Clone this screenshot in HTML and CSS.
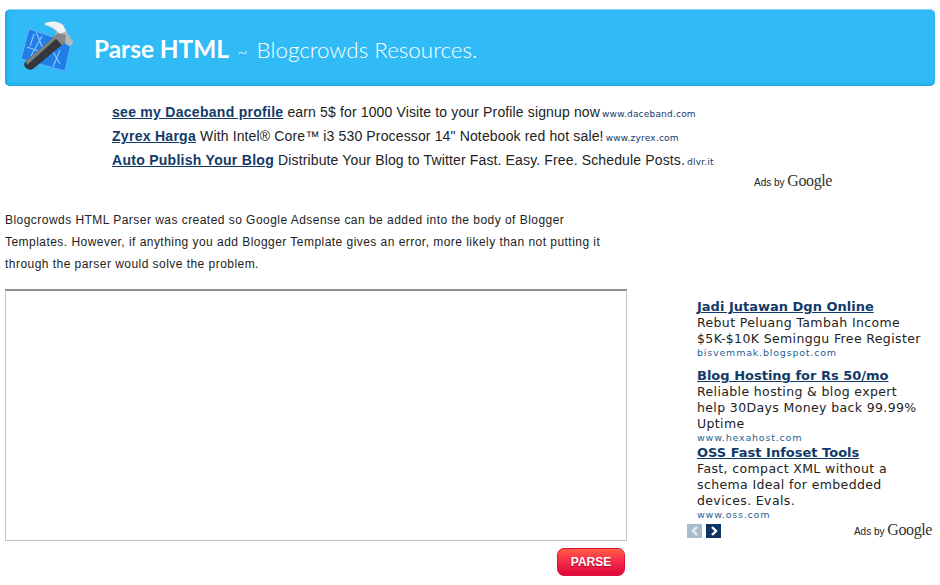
FILE: index.html
```html
<!DOCTYPE html>
<html lang="en">
<head>
    <meta charset="UTF-8">
    <title>Parse HTML ~ Blogcrowds Resources.</title>
    <link rel="stylesheet" href="styles.css">
</head>
<body>
    <div class="header">
        <svg class="logo" width="54" height="54" viewBox="20 21 54 54">
            <!-- blueprint -->
            <polygon points="29,29 71,43 65,71 21,59" fill="#1f7fe8" stroke="#62aef5" stroke-width="1"/>
            <path d="M36,32 L46,56 M42,36 L31,56 M27,47 L50,55 M52,50 L60,64 M60,50 L53,67 M34,34 L30,46" stroke="#8fc2f5" stroke-width="1.2" fill="none"/>
            <!-- handle -->
            <path d="M55,36 L63,44 L33,69 Q28,71 25,67 Q23,64 26,61 Z" fill="#34383b"/>
            <path d="M55,36 L57,38 L27,65 L26,61 Z" fill="#7d8285"/>
            <!-- head -->
            <path d="M45,23 Q56,19 63,25 L69,36 L73,41 Q73,45 70,46 Q67,46 64,42 L62,45 L54,36 L57,32 Q52,27 45,25 Z" fill="#b4b9bc"/>
            <path d="M45,23 Q56,19 63,25 L66,31 L60,34 Q53,26 45,25 Z" fill="#f1f2f3"/>
            <path d="M58,33 L66,35 L65,42 L62,45 L54,36 Z" fill="#85898c"/>
        </svg>
        <h1>Parse HTML <span class="tilde">~</span> <span class="tagline">Blogcrowds Resources.</span></h1>
    </div>

    <div class="link-ads">
        <p><a href="#">see my Daceband profile</a> earn 5$ for 1000 Visite to your Profile signup now <span class="ad-url">www.daceband.com</span></p>
        <p><a href="#">Zyrex Harga</a> With Intel® Core™ i3 530 Processor 14" Notebook red hot sale! <span class="ad-url">www.zyrex.com</span></p>
        <p><a href="#">Auto Publish Your Blog</a> Distribute Your Blog to Twitter Fast. Easy. Free. Schedule Posts. <span class="ad-url">dlvr.it</span></p>
        <div class="ads-by top-ads-by">Ads by <span class="google">Google</span></div>
    </div>

    <div class="content">
        <div class="parser">
            <p class="intro">Blogcrowds HTML Parser was created so Google Adsense can be added into the body of Blogger Templates. However, if anything you add Blogger Template gives an error, more likely than not putting it through the parser would solve the problem.</p>
            <textarea class="source"></textarea>
            <div class="actions">
                <button class="parse-btn">PARSE</button>
            </div>
        </div>

        <div class="side-ads">
            <div class="side-ad first">
                <a href="#">Jadi Jutawan Dgn Online</a>
                <p>Rebut Peluang Tambah Income $5K-$10K Seminggu Free Register</p>
                <span class="side-url">bisvemmak.blogspot.com</span>
            </div>
            <div class="side-ad">
                <a href="#">Blog Hosting for Rs 50/mo</a>
                <p>Reliable hosting &amp; blog expert help 30Days Money back 99.99% Uptime</p>
                <span class="side-url">www.hexahost.com</span>
            </div>
            <div class="side-ad">
                <a href="#">OSS Fast Infoset Tools</a>
                <p>Fast, compact XML without a schema Ideal for embedded devices. Evals.</p>
                <span class="side-url">www.oss.com</span>
            </div>
            <div class="side-foot">
                <div class="pager">
                    <span class="page-btn prev"><svg width="14" height="14" viewBox="0 0 14 14"><path d="M9,3 L5,7 L9,11" fill="none" stroke="#e6edf3" stroke-width="2.4"/></svg></span>
                    <span class="page-btn next"><svg width="14" height="14" viewBox="0 0 14 14"><path d="M5,3 L9,7 L5,11" fill="none" stroke="#fff" stroke-width="2.4"/></svg></span>
                </div>
                <div class="ads-by">Ads by <span class="google">Google</span></div>
            </div>
        </div>
    </div>
</body>
</html>
```

FILE: styles.css
```css
* {
    margin: 0;
    padding: 0;
    box-sizing: border-box;
}

body {
    background: #fff;
    color: #000;
    font-family: "Liberation Sans", Arial, sans-serif;
    padding: 9px 5px 0;
    overflow: hidden;
}

.header {
    width: 930px;
    height: 77px;
    display: flex;
    align-items: center;
    padding-left: 15px;
    background: #30bbf7;
    border-top: 1px solid #8ad8fa;
    border-radius: 5px;
    box-shadow: inset 0 -3px 4px -2px #1c9fe0, inset 3px 0 4px -2px #1c9fe0;
    color: #fff;
}

.logo {
    flex: none;
}

h1 {
    margin-left: 20px;
    font-family: Lato, sans-serif;
    font-size: 24.4px;
    font-weight: 700;
    white-space: nowrap;
}

.tilde {
    margin-left: 3px;
    font-size: 18px;
    font-weight: 300;
}

.tagline {
    margin-left: 3px;
    font-size: 22.4px;
    font-weight: 300;
}

.link-ads {
    margin-top: 14px;
    padding-left: 107px;
    font-size: 14px;
    line-height: 24px;
    letter-spacing: 0.14px;
    color: #222;
}

.link-ads p {
    height: 24px;
}

.link-ads a {
    color: #123a68;
    font-weight: 700;
    letter-spacing: 0.28px;
}

.ad-url {
    margin-left: -2px;
    font-family: "DejaVu Sans", sans-serif;
    font-size: 9px;
    letter-spacing: 0.2px;
    color: #123a68;
}

.ads-by {
    font-family: "Liberation Sans", Arial, sans-serif;
    font-size: 10px;
    letter-spacing: 0;
    color: #222;
}

.google {
    font-family: "Liberation Serif", serif;
    font-size: 16px;
    letter-spacing: -0.4px;
    color: #333;
}

.top-ads-by {
    margin-left: 642px;
    line-height: 18px;
}

.content {
    display: flex;
    margin-top: 17px;
}

.parser {
    width: 622px;
    flex: none;
}

.intro {
    width: 600px;
    font-size: 12px;
    line-height: 22px;
    letter-spacing: 0.46px;
    color: #222;
}

.source {
    display: block;
    width: 622px;
    height: 252px;
    margin-top: 14px;
    border: 1px solid #c4c4c4;
    border-top: 2px solid #8d8d8d;
    resize: none;
    outline: none;
}

.actions {
    display: flex;
    justify-content: flex-end;
    margin-top: 7px;
    padding-right: 2px;
}

.parse-btn {
    width: 68px;
    height: 28px;
    border: 1px solid #d9123c;
    border-radius: 7px;
    background: linear-gradient(#ff5f42 0%, #f8304a 40%, #e0063c 100%);
    color: #fff;
    font-family: "Liberation Sans", Arial, sans-serif;
    font-size: 12px;
    font-weight: 700;
    text-shadow: 0 1px 1px #a5062c;
}

.side-ads {
    width: 241px;
    margin: 90px 0 0 70px;
    font-family: "DejaVu Sans", sans-serif;
    font-size: 12.5px;
    line-height: 16px;
    color: #222;
    letter-spacing: 0.37px;
}

.side-ad p {
    max-width: 228px;
}

.side-ad a {
    display: block;
    color: #123a68;
    font-weight: 700;
    font-size: 13px;
    letter-spacing: 0;
}

.side-ad.first {
    margin-bottom: 9px;
}

.side-url {
    display: block;
    margin: -1px 0 1px;
    font-size: 9.5px;
    line-height: 13px;
    letter-spacing: 0.8px;
    color: #1f5f96;
}

.side-foot {
    display: flex;
    justify-content: space-between;
    align-items: center;
    margin: 0 3px 0 -10px;
}

.pager {
    display: flex;
    gap: 4px;
}

.page-btn {
    display: flex;
    width: 15px;
    height: 14px;
    align-items: center;
    justify-content: center;
}

.prev {
    background: #a9bccb;
}

.next {
    background: #0d3564;
}
```
